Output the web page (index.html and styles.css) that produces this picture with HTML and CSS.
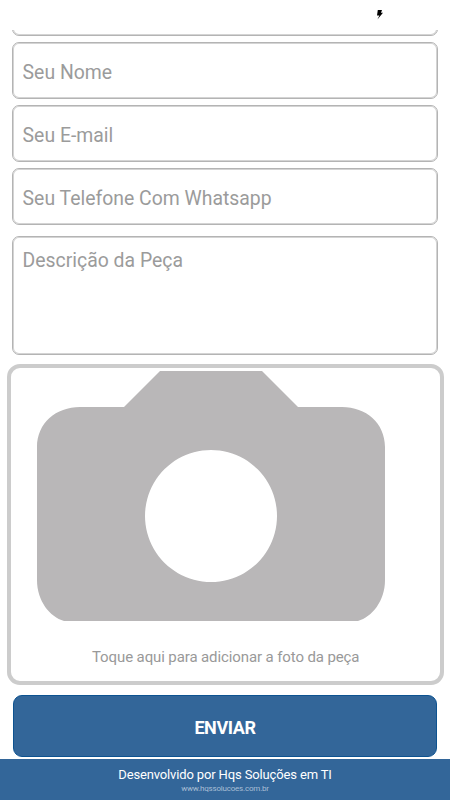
FILE: index.html
```html
<!DOCTYPE html>
<html lang="pt-BR">
<head>
    <meta charset="UTF-8">
    <meta name="viewport" content="width=device-width, initial-scale=1.0">
    <title>Enviar</title>
    <link rel="stylesheet" href="styles.css">
</head>
<body>
    <div class="status-bar">
        <svg class="bolt" width="8" height="12" viewBox="0 0 8 12">
            <path d="M1.8 1H6L5 3.8H7L1.4 10.6L3.4 6.4H1Z"/>
        </svg>
    </div>

    <form class="form">
        <input class="field field-first" type="text">
        <input class="field" type="text" placeholder="Seu Nome">
        <input class="field" type="email" placeholder="Seu E-mail">
        <input class="field" type="tel" placeholder="Seu Telefone Com Whatsapp">
        <textarea class="field description" placeholder="Descrição da Peça"></textarea>

        <div class="photo">
            <svg class="camera" width="348" height="250" viewBox="0 0 348 250">
                <path fill-rule="evenodd" d="M0 76C0 52 19 36 43 36H87L123 0H225L261 36H305C329 36 348 52 348 76V209C348 230 335 246 321 250H27C13 246 0 230 0 209ZM174 79a66 66 0 1 0 0.01 0Z"/>
            </svg>
            <span class="photo-label">Toque aqui para adicionar a foto da peça</span>
        </div>

        <button class="send" type="button">ENVIAR</button>
    </form>

    <footer class="footer">
        <span class="footer-title">Desenvolvido por Hqs Soluções em TI</span>
        <span class="footer-link">www.hqssolucoes.com.br</span>
    </footer>
</body>
</html>
```
FILE: styles.css
```css
* { box-sizing: border-box; }
body {
    margin: 0;
    height: 800px;
    display: flex;
    flex-direction: column;
    overflow: hidden;
    background: #fff;
    font-family: Roboto, Arial, sans-serif;
}
.status-bar {
    flex: none;
    height: 30px;
    padding: 9px 66px 0 0;
    display: flex;
    justify-content: flex-end;
    align-items: flex-start;
}
.bolt { fill: #000; }
.form {
    flex: none;
    height: 729px;
    display: flex;
    flex-direction: column;
    justify-content: flex-end; /* scrolled to the end, first field is cut */
    overflow: hidden;
    padding: 0 12px 2px;
}
.field {
    flex: none;
    width: 426px;
    height: 57px;
    margin: 0 0 6px;
    padding: 3px 9px 0 9.6px;
    border: 1px solid #b4b4b4;
    border-radius: 7px;
    box-shadow: inset 0 0 0 1px #d4d4d4;
    background: #fff;
    outline: none;
    font-family: inherit;
    font-size: 19.4px;
    letter-spacing: 0;
}
.field::placeholder {
    color: #9b9b9b;
    opacity: 1;
}
.field[type="tel"] { margin-bottom: 11px; }
.description {
    height: 119px;
    margin-bottom: 9px;
    padding-top: 12px;
    resize: none;
}
.photo {
    flex: none;
    width: 437px;
    height: 321px;
    margin: 0 0 10px -5px;
    padding: 3px 0 0 26px;
    border: 4px solid #ccc;
    border-radius: 13px;
}
.camera {
    display: block;
    fill: #b9b7b8;
}
.photo-label {
    display: block;
    margin: 27px 0 0 55px;
    color: #999;
    font-size: 15px;
    letter-spacing: -0.11px;
    line-height: 18px;
    white-space: nowrap;
}
.send {
    flex: none;
    width: 424px;
    height: 62px;
    margin-left: 1px;
    padding: 2px 0 0;
    border: 1px solid #0d5391;
    border-radius: 9px;
    background: #336699;
    color: #fff;
    font-family: inherit;
    font-size: 18px;
    font-weight: bold;
    letter-spacing: -0.4px;
}
.footer {
    flex: none;
    height: 41px;
    padding-top: 8px;
    display: flex;
    flex-direction: column;
    align-items: center;
    background: #336699;
}
.footer-title {
    color: #fff;
    font-size: 13px;
    letter-spacing: -0.14px;
    line-height: 16px;
}
.footer-link {
    color: #a9bfd5;
    font-size: 8px;
    letter-spacing: -0.2px;
    line-height: 12px;
}
```
